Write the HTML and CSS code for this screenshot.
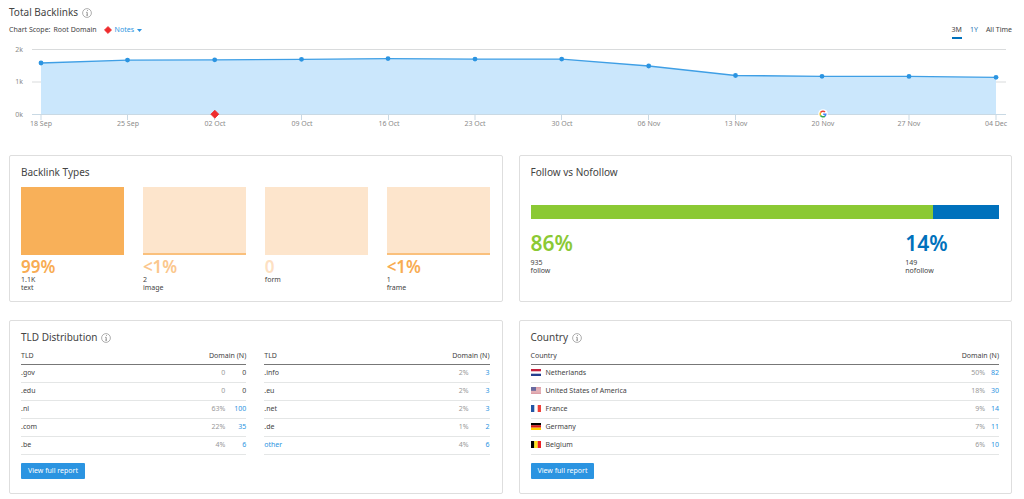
FILE: index.html
```html
<!DOCTYPE html>
<html lang="en">
<head>
<meta charset="utf-8">
<meta name="viewport" content="width=device-width, initial-scale=1">
<title>Backlinks overview</title>
<link rel="stylesheet" href="styles.css">
</head>
<body>
<svg class="defs" aria-hidden="true">
  <symbol id="info" viewBox="0 0 10 10">
    <circle cx="5" cy="5" r="4.400" fill="none" stroke="#999" stroke-width=".8"/>
    <path d="M4.200 4.300h1v3M4.300 7.200h1.700M5.200 2.500h.8" fill="none" stroke="#888" stroke-width=".9"/>
  </symbol>
</svg>
<main class="page">
  <section class="trend">
    <h2 class="title">Total Backlinks <svg class="info"><use href="#info"/></svg></h2>
    <div class="toolbar">
      <span>Chart Scope:</span>
      <span class="scope">Root Domain</span>
      <button class="notes" type="button">
        <svg class="notes-mark" viewBox="0 0 8 8"><path d="M4 .4 7.600 4 4 7.600.4 4z" fill="#ef2b2d" stroke="#ef2b2d" stroke-width=".6" stroke-linejoin="round"/></svg>
        Notes
        <svg class="notes-arrow" viewBox="0 0 5 3"><path d="M0 0h5L2.500 3z" fill="#2b94e1"/></svg>
      </button>
      <div class="ranges">
        <button class="range range-active" type="button">3M</button>
        <button class="range range-link" type="button">1Y</button>
        <button class="range" type="button">All Time</button>
      </div>
    </div>
    <svg class="chart" viewBox="0 0 1003 88" role="img" aria-label="Total backlinks by week">
      <g stroke="#d9dbdc" stroke-width="1">
        <path d="M23 8.500H997M23 41H997M23 73.500H997"/>
      </g>
      <path fill="#cbe7fc" d="M32 22 118.500 19.100 205.700 18.800 292.500 18.300 379 17.600 466 18.100 552.700 18.100 639.700 25 726.500 34.500 813 35.300 900 35.400 987 36.300V73.500H32z"/>
      <path stroke="#c9d9e4" d="M23 73.500H997M32 74v5M118.500 74v5M205.500 74v5M292.500 74v5M379.500 74v5M466 74v5M552.500 74v5M639.500 74v5M726.500 74v5M813.500 74v5M900 74v5M987 74v5"/>
      <path fill="none" stroke="#3f9fe5" stroke-width="1.300" d="M32 22 118.500 19.100 205.700 18.800 292.500 18.300 379 17.600 466 18.100 552.700 18.100 639.700 25 726.500 34.500 813 35.300 900 35.400 987 36.300"/>
      <g fill="#2b94e1">
        <circle cx="32" cy="22" r="2.400"/><circle cx="118.500" cy="19.100" r="2.400"/><circle cx="205.700" cy="18.800" r="2.400"/><circle cx="292.500" cy="18.300" r="2.400"/><circle cx="379" cy="17.600" r="2.400"/><circle cx="466" cy="18.100" r="2.400"/><circle cx="552.700" cy="18.100" r="2.400"/><circle cx="639.700" cy="25" r="2.400"/><circle cx="726.500" cy="34.500" r="2.400"/><circle cx="813" cy="35.300" r="2.400"/><circle cx="900" cy="35.400" r="2.400"/><circle cx="987" cy="36.300" r="2.400"/>
      </g>
      <path d="m205.800 69.200 4 4-4 4-4-4z" fill="#ef2b2d" stroke="#ef2b2d" stroke-width=".8" stroke-linejoin="round"/>
      <circle cx="814" cy="73" r="4.800" fill="#fff"/>
      <g fill="none" stroke-width="1.500">
        <path d="M816 71.100A2.800 2.800 0 0 0 811.500 71.700" stroke="#ea4335"/>
        <path d="M811.500 71.700A2.800 2.800 0 0 0 811.500 74.300" stroke="#fbbc05"/>
        <path d="M811.500 74.300A2.800 2.800 0 0 0 815.900 75.100" stroke="#34a853"/>
        <path d="M815.900 75.100A2.800 2.800 0 0 0 816.800 73.200H814.200" stroke="#4285f4"/>
      </g>
      <g class="axis-y"><text x="14" y="11">2k</text><text x="14" y="43">1k</text><text x="14" y="76">0k</text></g>
      <g class="axis-x">
        <text x="32" y="85">18 Sep</text><text x="119" y="85">25 Sep</text><text x="206" y="85">02 Oct</text><text x="293" y="85">09 Oct</text><text x="380" y="85">16 Oct</text><text x="466" y="85">23 Oct</text><text x="553" y="85">30 Oct</text><text x="640" y="85">06 Nov</text><text x="727" y="85">13 Nov</text><text x="814" y="85">20 Nov</text><text x="900" y="85">27 Nov</text><text x="987" y="85">04 Dec</text>
      </g>
    </svg>
  </section>

  <div class="cards">
    <section class="card">
      <h2 class="title">Backlink Types</h2>
      <div class="types">
        <div class="type type-text"><div class="tile tile-full"></div><strong class="share">99%</strong><span>1.1K</span><span>text</span></div>
        <div class="type type-image"><div class="tile tile-some"></div><strong class="share">&lt;1%</strong><span>2</span><span>image</span></div>
        <div class="type type-form"><div class="tile"></div><strong class="share">0</strong><span>form</span></div>
        <div class="type type-frame"><div class="tile tile-some"></div><strong class="share">&lt;1%</strong><span>1</span><span>frame</span></div>
      </div>
    </section>

    <section class="card">
      <h2 class="title">Follow vs Nofollow</h2>
      <div class="split"><div class="split-follow" style="width:86%"></div></div>
      <div class="follow">
        <div class="type follow-yes"><strong class="rate">86%</strong><span>935</span><span>follow</span></div>
        <div class="type follow-no"><strong class="rate">14%</strong><span>149</span><span>nofollow</span></div>
      </div>
    </section>

    <section class="card">
      <h2 class="title">TLD Distribution <svg class="info"><use href="#info"/></svg></h2>
      <div class="tables">
        <table class="data">
          <thead><tr><th>TLD</th><th class="num" colspan="2">Domain (N)</th></tr></thead>
          <tbody>
            <tr><td>.gov</td><td class="pct">0</td><td class="num">0</td></tr>
            <tr><td>.edu</td><td class="pct">0</td><td class="num">0</td></tr>
            <tr><td>.nl</td><td class="pct">63%</td><td class="num"><a href="#">100</a></td></tr>
            <tr><td>.com</td><td class="pct">22%</td><td class="num"><a href="#">35</a></td></tr>
            <tr><td>.be</td><td class="pct">4%</td><td class="num"><a href="#">6</a></td></tr>
          </tbody>
        </table>
        <table class="data">
          <thead><tr><th>TLD</th><th class="num" colspan="2">Domain (N)</th></tr></thead>
          <tbody>
            <tr><td>.info</td><td class="pct">2%</td><td class="num"><a href="#">3</a></td></tr>
            <tr><td>.eu</td><td class="pct">2%</td><td class="num"><a href="#">3</a></td></tr>
            <tr><td>.net</td><td class="pct">2%</td><td class="num"><a href="#">3</a></td></tr>
            <tr><td>.de</td><td class="pct">1%</td><td class="num"><a href="#">2</a></td></tr>
            <tr><td><a href="#">other</a></td><td class="pct">4%</td><td class="num"><a href="#">6</a></td></tr>
          </tbody>
        </table>
      </div>
      <button class="report" type="button">View full report</button>
    </section>

    <section class="card">
      <h2 class="title">Country <svg class="info"><use href="#info"/></svg></h2>
      <table class="data countries">
        <thead><tr><th>Country</th><th class="num" colspan="2">Domain (N)</th></tr></thead>
        <tbody>
          <tr><td><svg class="flag" viewBox="0 0 10 7"><path fill="#fff" d="M0 0h10v7H0z"/><path fill="#c4213c" d="M0 0h10v2.300H0z"/><path fill="#25408f" d="M0 4.700h10V7H0z"/></svg>Netherlands</td><td class="pct">50%</td><td class="num"><a href="#">82</a></td></tr>
          <tr><td><svg class="flag" viewBox="0 0 10 7"><path fill="#f3dfe2" d="M0 0h10v7H0z"/><path stroke="#cf7480" stroke-width=".6" d="M0 .5h10M0 1.700h10M0 2.900h10M0 4.100h10M0 5.300h10M0 6.500h10"/><path fill="#696a9f" d="M0 0h5v3.800H0z"/></svg>United States of America</td><td class="pct">18%</td><td class="num"><a href="#">30</a></td></tr>
          <tr><td><svg class="flag" viewBox="0 0 10 7"><path fill="#fff" d="M0 0h10v7H0z"/><path fill="#2356a5" d="M0 0h3.300v7H0z"/><path fill="#ef4039" d="M6.700 0H10v7H6.700z"/></svg>France</td><td class="pct">9%</td><td class="num"><a href="#">14</a></td></tr>
          <tr><td><svg class="flag" viewBox="0 0 10 7"><path d="M0 0h10v2.400H0z"/><path fill="#d91818" d="M0 2.300h10v2.400H0z"/><path fill="#fc0" d="M0 4.700h10V7H0z"/></svg>Germany</td><td class="pct">7%</td><td class="num"><a href="#">11</a></td></tr>
          <tr><td><svg class="flag" viewBox="0 0 10 7"><path d="M0 0h3.400v7H0z"/><path fill="#ffe51a" d="M3.300 0h3.400v7H3.300z"/><path fill="#ed2024" d="M6.700 0H10v7H6.700z"/></svg>Belgium</td><td class="pct">6%</td><td class="num"><a href="#">10</a></td></tr>
        </tbody>
      </table>
      <button class="report" type="button">View full report</button>
    </section>
  </div>
</main>
</body>
</html>
```
FILE: styles.css
```css
* { box-sizing: border-box; }
body {
  margin: 0;
  background: #fff;
  color: #444;
  font: 7px/8px "Noto Sans", "Open Sans", sans-serif;
}
button { border: 0; padding: 0; background: none; color: inherit; font: inherit; cursor: pointer; }
a { color: #2b94e1; text-decoration: none; }
.defs { position: absolute; width: 0; height: 0; }
.page { padding: 5px 12px 6px 9px; }
.title {
  display: flex;
  align-items: center;
  gap: 4px;
  margin: 0;
  color: #444;
  font-size: 10px;
  line-height: 14px;
  font-weight: 400;
}
.info { width: 10px; height: 10px; margin-top: 2px; }

.toolbar { display: flex; align-items: center; height: 22px; }
.scope { margin-left: 3px; }
.notes { display: flex; align-items: center; gap: 3px; margin-left: 7px; color: #2b94e1; }
.notes-mark { width: 8px; height: 8px; }
.notes-arrow { width: 5px; height: 3px; }
.ranges { display: flex; gap: 8px; margin-left: auto; }
.range { height: 17px; padding: 4px 0 3px; border-bottom: 2px solid transparent; }
.range-active { border-color: #0071bc; }
.range-link { color: #2b78b5; }
.chart { display: block; width: 100%; height: auto; }
.axis-x, .axis-y { fill: #8b8b8b; font-size: 7px; text-anchor: middle; }
.axis-y { text-anchor: end; }

.cards { display: grid; grid-template-columns: 1fr 1fr; gap: 18px 16px; margin-top: 26px; }
.card { padding: 9px 12px 9px 11px; border: 1px solid #dedede; border-radius: 2px; }

.types { display: grid; grid-template-columns: repeat(4, 1fr); gap: 19px; margin-top: 8px; }
.type { display: flex; flex-direction: column; }
.tile { height: 68px; background: #fde5cc; }
.tile-full { background: #f8b059; }
.tile-some { border-bottom: 2px solid #fac07c; }
.share { margin-top: 2px; font-size: 17px; line-height: 19px; font-weight: 600; }
.type-text .share, .type-frame .share { color: #f8ac52; }
.type-image .share { color: #fbc78d; }
.type-form .share { color: #fde0c2; }

.split { height: 14px; margin-top: 26px; background: #0071bc; }
.split-follow { height: 100%; background: #8bc934; }
.follow { display: grid; grid-template-columns: 4fr 1fr; }
.rate { font-size: 21px; line-height: 28px; font-weight: 600; margin: 10px 0 2px; }
.follow-yes .rate { color: #8bc934; }
.follow-no .rate { color: #0071bc; }

.tables { display: grid; grid-template-columns: 1fr 1fr; gap: 18px; }
.data { width: 100%; border-collapse: collapse; }
.data th { height: 20px; padding: 4px 0 0; border-bottom: 1px solid #777; font-weight: 400; text-align: left; }
.data td { height: 18px; padding: 0; border-bottom: 1px solid #e4e6e6; }
.data .num { text-align: right; }
.data td.num { width: 21px; }
.data .pct { color: #999; text-align: right; }
.countries td.num { width: 14px; }
.flag { width: 10px; height: 7px; margin-right: 5px; vertical-align: -1px; }
.report {
  display: block;
  margin: 8px 0 5px;
  padding: 4px 7px;
  border-radius: 1px;
  background: #2b94e1;
  color: #fff;
}
```
